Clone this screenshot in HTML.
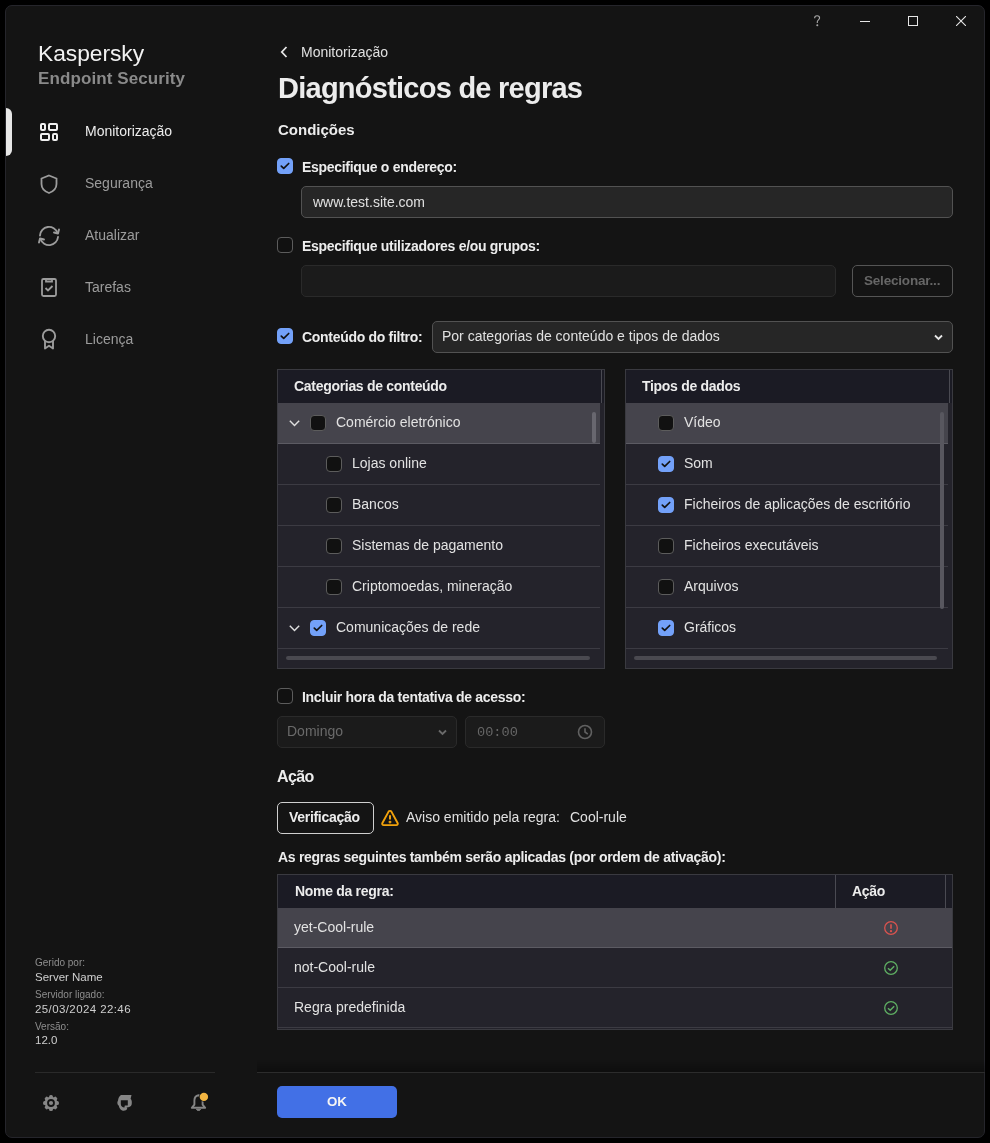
<!DOCTYPE html>
<html><head><meta charset="utf-8">
<style>
*{margin:0;padding:0;box-sizing:border-box}
html,body{width:990px;height:1143px;background:#000;overflow:hidden}
body{font-family:"Liberation Sans",sans-serif;color:#e8e8e8;position:relative}
.win{position:absolute;left:5px;top:5px;width:980px;height:1133px;background:#141414;border:1px solid #25252b;border-radius:7px;overflow:hidden}
.a{position:absolute;white-space:nowrap;line-height:1;will-change:transform}
.b{font-weight:bold}
.ind{position:absolute;left:6px;top:108px;width:6px;height:48px;background:#e6e6e6;border-radius:0 6px 6px 0}
.nav{font-size:14px;color:#9c9c9c}
.foot1{font-size:10px;color:#8e8e8e}
.foot2{font-size:11.5px;color:#cfcfcf}
.cb{position:absolute;width:16px;height:16px;border-radius:4px;border:1px solid #5c5c5c;background:#111}
.cb.on{background:#73a1f9;border-color:#73a1f9}
.cb svg{position:absolute;left:-1px;top:-1px}
.lbl{font-size:14px;font-weight:bold;color:#ececec;letter-spacing:-0.3px}
.inp{position:absolute;border-radius:5px}
.tbl{position:absolute;border:1px solid #3a3a40;background:#24232b}
.hdr{position:absolute;left:0;top:0;background:#1b1b24}
.row{position:absolute;left:0;height:41px;border-bottom:1px solid #3c3b43}
.row.hl{background:#45444c;border-bottom-color:#5c5b63}
.rt{font-size:14px;color:#e2e2e2}
.ht{font-size:14px;font-weight:bold;color:#ececec;letter-spacing:-0.3px}
</style></head><body>
<div class="win"></div>

<!-- sidebar -->
<div class="a" style="left:37.6px;top:42.2px;font-size:22.8px;color:#f2f2f2;letter-spacing:-0.05px">Kaspersky</div>
<div class="a b" style="left:37.8px;top:70.4px;font-size:17px;color:#8a8a8a;letter-spacing:0.1px">Endpoint Security</div>
<div class="ind"></div>

<svg class="a" style="left:40px;top:123px" width="18" height="18" viewBox="0 0 18 18" fill="none" stroke="#f0f0f0" stroke-width="2">
<rect x="1" y="1" width="4" height="6" rx="1"/><rect x="9" y="1" width="8" height="6" rx="1"/><rect x="1" y="11" width="8" height="6" rx="1"/><rect x="13" y="11" width="4" height="6" rx="1"/></svg>
<div class="a nav" style="left:85px;top:124.4px;color:#ededed">Monitorização</div>

<svg class="a" style="left:40px;top:174px" width="18" height="20" viewBox="0 0 18 20" fill="none" stroke="#9c9c9c" stroke-width="1.8">
<path d="M9 1.5 L16.5 4.5 V10 C16.5 14.5 13 17.5 9 19 C5 17.5 1.5 14.5 1.5 10 V4.5 Z"/></svg>
<div class="a nav" style="left:85px;top:176.4px">Segurança</div>

<svg class="a" style="left:37px;top:224px" width="24" height="24" viewBox="0 0 24 24" fill="none" stroke="#9c9c9c" stroke-width="1.9" stroke-linecap="round" stroke-linejoin="round">
<path d="M3 11.5 A9 9 0 0 1 20.5 9"/><path d="M21 13 A9 9 0 0 1 3.5 15"/><path d="M22 5.5 L21 9.5 L17 8.5"/><path d="M2 18.5 L3 14.5 L7 15.5"/></svg>
<div class="a nav" style="left:85px;top:228.4px">Atualizar</div>

<svg class="a" style="left:40px;top:277px" width="18" height="20" viewBox="0 0 18 20" fill="none" stroke="#9c9c9c" stroke-width="1.8">
<rect x="2" y="2" width="14" height="17" rx="1.5"/><path d="M6 2 V4.5 H12 V2"/><path d="M5.5 11 L8 13.5 L12.5 9"/></svg>
<div class="a nav" style="left:85px;top:280.4px">Tarefas</div>

<svg class="a" style="left:40px;top:328px" width="18" height="22" viewBox="0 0 18 22" fill="none" stroke="#9c9c9c" stroke-width="1.9" stroke-linejoin="round">
<circle cx="9" cy="8" r="6.2"/><path d="M5 13 V20.5 L9 17.8 L13 20.5 V13"/></svg>
<div class="a nav" style="left:85px;top:332.4px">Licença</div>

<div class="a foot1" style="left:35px;top:957.7px">Gerido por:</div>
<div class="a foot2" style="left:35px;top:971.5px">Server Name</div>
<div class="a foot1" style="left:35px;top:989.7px">Servidor ligado:</div>
<div class="a foot2" style="left:35px;top:1003.5px;letter-spacing:0.4px">25/03/2024 22:46</div>
<div class="a foot1" style="left:35px;top:1021.7px">Versão:</div>
<div class="a foot2" style="left:35px;top:1035px">12.0</div>
<div class="a" style="left:35px;top:1072px;width:180px;height:1px;background:#2a2a2a"></div>

<!-- footer icons -->
<svg class="a" style="left:38px;top:1090px" width="26" height="26" viewBox="0 0 26 26"><g fill="#868686"><rect x="11.1" y="5.1" width="3.8" height="4" rx="1.5" transform="rotate(0 13 13)"/><rect x="11.1" y="5.1" width="3.8" height="4" rx="1.5" transform="rotate(45 13 13)"/><rect x="11.1" y="5.1" width="3.8" height="4" rx="1.5" transform="rotate(90 13 13)"/><rect x="11.1" y="5.1" width="3.8" height="4" rx="1.5" transform="rotate(135 13 13)"/><rect x="11.1" y="5.1" width="3.8" height="4" rx="1.5" transform="rotate(180 13 13)"/><rect x="11.1" y="5.1" width="3.8" height="4" rx="1.5" transform="rotate(225 13 13)"/><rect x="11.1" y="5.1" width="3.8" height="4" rx="1.5" transform="rotate(270 13 13)"/><rect x="11.1" y="5.1" width="3.8" height="4" rx="1.5" transform="rotate(315 13 13)"/><circle cx="13" cy="13" r="6.3"/></g><circle cx="13" cy="13" r="3.9" fill="#141414"/><circle cx="13" cy="13" r="2.1" fill="#868686"/></svg>
<svg class="a" style="left:112px;top:1090px" width="26" height="26" viewBox="0 0 26 26"><path fill="#868686" fill-rule="evenodd" d="M9 5 L19.5 5 L18.6 8.8 C19.8 9.8 20.2 12.5 19.6 14.8 C19 16.6 17 17.6 14.6 17.6 L15.3 18.8 C14.6 20.4 12.4 21.2 10.2 20.6 C8.2 19.8 7.2 17.8 6.8 15.8 C5.2 14.6 4.8 12.4 6 10.6 C6.3 8.2 7.3 6 9 5 Z M8.8 10.2 L15.8 10.2 L15.8 15.4 L12.8 15.6 L12.4 17.6 C10.4 17.4 8.8 16.2 8.8 14 Z"/></svg>
<svg class="a" style="left:185px;top:1088px" width="28" height="28" viewBox="0 0 28 28" fill="none" stroke="#868686" stroke-width="1.9" stroke-linejoin="round">
<path d="M6.8 19.8 H20.2 L17.6 16.6 V12.6 C17.6 9.6 16.2 7.6 13.5 7.2 C10.8 7.6 9.4 9.6 9.4 12.6 V16.6 Z"/><path d="M11.4 21.4 C12 22.8 15 22.8 15.6 21.4 Z" fill="#868686" stroke-width="1"/>
<circle cx="18.9" cy="8.9" r="4.9" fill="#141414" stroke="none"/><circle cx="18.9" cy="8.9" r="4.2" fill="#f2b541" stroke="none"/></svg>

<!-- title bar -->
<svg class="a" style="left:812px;top:14px" width="10" height="13" viewBox="0 0 10 13" fill="none" stroke="#a8a8a8" stroke-width="1.1"><path d="M2.6 4.2 C2.6 2.6 3.7 1.8 5.1 1.8 C6.6 1.8 7.6 2.7 7.6 4.1 C7.6 5.6 5.3 6.2 5.3 7.8 V9"/><circle cx="5.3" cy="11.2" r="0.45" fill="#a8a8a8"/></svg>
<div class="a" style="left:860px;top:21px;width:10px;height:1px;background:#e6e6e6"></div>
<div class="a" style="left:908px;top:16px;width:10px;height:10px;border:1px solid #e6e6e6"></div>
<svg class="a" style="left:956px;top:16px" width="10" height="10" viewBox="0 0 10 10" stroke="#e6e6e6" stroke-width="1.1"><path d="M0 0 L10 10 M10 0 L0 10"/></svg>

<!-- header -->
<svg class="a" style="left:280px;top:46px" width="8" height="12" viewBox="0 0 8 12" fill="none" stroke="#e6e6e6" stroke-width="1.8"><path d="M6.5 1 L1.8 6 L6.5 11"/></svg>
<div class="a" style="left:300.9px;top:45.4px;font-size:14px;color:#e0e0e0">Monitorização</div>
<div class="a b" style="left:277.5px;top:74.2px;font-size:29px;color:#ececec;letter-spacing:-0.75px">Diagnósticos de regras</div>
<div class="a b" style="left:278px;top:122.2px;font-size:15px;color:#ececec">Condições</div>

<!-- address -->
<div class="cb on" style="left:277px;top:158px"><svg width="16" height="16" viewBox="0 0 16 16" fill="none" stroke="#121212" stroke-width="1.7" stroke-linecap="round" stroke-linejoin="round"><path d="M4.3 8.1 L6.7 10.4 L11.7 5.5"/></svg></div>
<div class="a lbl" style="left:301.7px;top:160px">Especifique o endereço:</div>
<div class="inp" style="left:301px;top:186px;width:652px;height:32px;background:#262626;border:1px solid #525252"></div>
<div class="a" style="left:313px;top:195px;font-size:14px;color:#e0e0e0">www.test.site.com</div>

<!-- users -->
<div class="cb" style="left:277px;top:237px"></div>
<div class="a lbl" style="left:301.7px;top:239.4px">Especifique utilizadores e/ou grupos:</div>
<div class="inp" style="left:301px;top:265px;width:535px;height:32px;background:#1b1b1b;border:1px solid #2a2a2a"></div>
<div class="inp" style="left:852px;top:265px;width:101px;height:32px;border:1px solid #555"></div>
<div class="a b" style="left:864px;top:273.5px;font-size:13.5px;color:#666;letter-spacing:-0.2px">Selecionar...</div>

<!-- filter -->
<div class="cb on" style="left:277px;top:328px"><svg width="16" height="16" viewBox="0 0 16 16" fill="none" stroke="#121212" stroke-width="1.7" stroke-linecap="round" stroke-linejoin="round"><path d="M4.3 8.1 L6.7 10.4 L11.7 5.5"/></svg></div>
<div class="a lbl" style="left:301.7px;top:330.4px">Conteúdo do filtro:</div>
<div class="inp" style="left:432px;top:321px;width:521px;height:32px;background:#262626;border:1px solid #525252"></div>
<div class="a" style="left:441.7px;top:329.4px;font-size:14px;color:#e0e0e0">Por categorias de conteúdo e tipos de dados</div>
<svg class="a" style="left:934px;top:334px" width="9" height="7" viewBox="0 0 9 7" fill="none" stroke="#e6e6e6" stroke-width="1.8"><path d="M1 1.5 L4.5 5 L8 1.5"/></svg>

<div class="tbl" style="left:277px;top:369px;width:328px;height:300px"></div>
<div class="hdr" style="position:absolute;left:278px;top:370px;width:326px;height:33px;background:#1b1b24"></div>
<div class="a" style="left:601px;top:370px;width:1px;height:33px;background:#4a4a52"></div>
<div class="a ht" style="left:294px;top:379.2px">Categorias de conteúdo</div>
<div class="a" style="left:278px;top:403px;width:322px;height:40px;background:#45444c"></div>
<div class="a" style="left:278px;top:443px;width:322px;height:1px;background:#5c5b63"></div>
<svg class="a" style="left:289px;top:420px" width="11" height="7" viewBox="0 0 11 7" fill="none" stroke="#e0e0e0" stroke-width="1.4"><path d="M0.8 0.8 L5.5 5.6 L10.2 0.8"/></svg>
<div class="cb" style="left:310px;top:415px"></div>
<div class="a rt" style="left:336px;top:415.4px">Comércio eletrónico</div>
<div class="a" style="left:278px;top:444px;width:322px;height:40px;background:#24232b"></div>
<div class="a" style="left:278px;top:484px;width:322px;height:1px;background:#3c3b43"></div>
<div class="cb" style="left:326px;top:456px"></div>
<div class="a rt" style="left:352px;top:456.4px">Lojas online</div>
<div class="a" style="left:278px;top:485px;width:322px;height:40px;background:#24232b"></div>
<div class="a" style="left:278px;top:525px;width:322px;height:1px;background:#3c3b43"></div>
<div class="cb" style="left:326px;top:497px"></div>
<div class="a rt" style="left:352px;top:497.4px">Bancos</div>
<div class="a" style="left:278px;top:526px;width:322px;height:40px;background:#24232b"></div>
<div class="a" style="left:278px;top:566px;width:322px;height:1px;background:#3c3b43"></div>
<div class="cb" style="left:326px;top:538px"></div>
<div class="a rt" style="left:352px;top:538.4px">Sistemas de pagamento</div>
<div class="a" style="left:278px;top:567px;width:322px;height:40px;background:#24232b"></div>
<div class="a" style="left:278px;top:607px;width:322px;height:1px;background:#3c3b43"></div>
<div class="cb" style="left:326px;top:579px"></div>
<div class="a rt" style="left:352px;top:579.4px">Criptomoedas, mineração</div>
<div class="a" style="left:278px;top:608px;width:322px;height:40px;background:#24232b"></div>
<div class="a" style="left:278px;top:648px;width:322px;height:1px;background:#3c3b43"></div>
<svg class="a" style="left:289px;top:625px" width="11" height="7" viewBox="0 0 11 7" fill="none" stroke="#e0e0e0" stroke-width="1.4"><path d="M0.8 0.8 L5.5 5.6 L10.2 0.8"/></svg>
<div class="cb on" style="left:310px;top:620px"><svg width="16" height="16" viewBox="0 0 16 16" fill="none" stroke="#121212" stroke-width="1.7" stroke-linecap="round" stroke-linejoin="round"><path d="M4.3 8.1 L6.7 10.4 L11.7 5.5"/></svg></div>
<div class="a rt" style="left:336px;top:620.4px">Comunicações de rede</div>
<div class="a" style="left:592px;top:412px;width:4px;height:31px;border-radius:2px;background:#68676f"></div>
<div class="a" style="left:286px;top:656px;width:304px;height:4px;border-radius:2px;background:#4a4950"></div>
<div class="tbl" style="left:625px;top:369px;width:328px;height:300px"></div>
<div class="a" style="left:626px;top:370px;width:326px;height:33px;background:#1b1b24"></div>
<div class="a" style="left:949px;top:370px;width:1px;height:33px;background:#4a4a52"></div>
<div class="a ht" style="left:642px;top:379.2px">Tipos de dados</div>
<div class="a" style="left:626px;top:403px;width:322px;height:40px;background:#45444c"></div>
<div class="a" style="left:626px;top:443px;width:322px;height:1px;background:#5c5b63"></div>
<div class="cb" style="left:658px;top:415px"></div>
<div class="a rt" style="left:684px;top:415.4px">Vídeo</div>
<div class="a" style="left:626px;top:444px;width:322px;height:40px;background:#24232b"></div>
<div class="a" style="left:626px;top:484px;width:322px;height:1px;background:#3c3b43"></div>
<div class="cb on" style="left:658px;top:456px"><svg width="16" height="16" viewBox="0 0 16 16" fill="none" stroke="#121212" stroke-width="1.7" stroke-linecap="round" stroke-linejoin="round"><path d="M4.3 8.1 L6.7 10.4 L11.7 5.5"/></svg></div>
<div class="a rt" style="left:684px;top:456.4px">Som</div>
<div class="a" style="left:626px;top:485px;width:322px;height:40px;background:#24232b"></div>
<div class="a" style="left:626px;top:525px;width:322px;height:1px;background:#3c3b43"></div>
<div class="cb on" style="left:658px;top:497px"><svg width="16" height="16" viewBox="0 0 16 16" fill="none" stroke="#121212" stroke-width="1.7" stroke-linecap="round" stroke-linejoin="round"><path d="M4.3 8.1 L6.7 10.4 L11.7 5.5"/></svg></div>
<div class="a rt" style="left:684px;top:497.4px">Ficheiros de aplicações de escritório</div>
<div class="a" style="left:626px;top:526px;width:322px;height:40px;background:#24232b"></div>
<div class="a" style="left:626px;top:566px;width:322px;height:1px;background:#3c3b43"></div>
<div class="cb" style="left:658px;top:538px"></div>
<div class="a rt" style="left:684px;top:538.4px">Ficheiros executáveis</div>
<div class="a" style="left:626px;top:567px;width:322px;height:40px;background:#24232b"></div>
<div class="a" style="left:626px;top:607px;width:322px;height:1px;background:#3c3b43"></div>
<div class="cb" style="left:658px;top:579px"></div>
<div class="a rt" style="left:684px;top:579.4px">Arquivos</div>
<div class="a" style="left:626px;top:608px;width:322px;height:40px;background:#24232b"></div>
<div class="a" style="left:626px;top:648px;width:322px;height:1px;background:#3c3b43"></div>
<div class="cb on" style="left:658px;top:620px"><svg width="16" height="16" viewBox="0 0 16 16" fill="none" stroke="#121212" stroke-width="1.7" stroke-linecap="round" stroke-linejoin="round"><path d="M4.3 8.1 L6.7 10.4 L11.7 5.5"/></svg></div>
<div class="a rt" style="left:684px;top:620.4px">Gráficos</div>
<div class="a" style="left:940px;top:412px;width:4px;height:197px;border-radius:2px;background:#58575f"></div>
<div class="a" style="left:634px;top:656px;width:303px;height:4px;border-radius:2px;background:#4a4950"></div>
<div class="cb" style="left:277px;top:688px"></div>
<div class="a lbl" style="left:301.7px;top:690px">Incluir hora da tentativa de acesso:</div>
<div class="inp" style="left:277px;top:716px;width:180px;height:32px;background:#1b1b1b;border:1px solid #2a2a2a"></div>
<div class="a" style="left:286.6px;top:724.4px;font-size:14px;color:#6a6a6a">Domingo</div>
<svg class="a" style="left:438px;top:729px" width="9" height="7" viewBox="0 0 9 7" fill="none" stroke="#6a6a6a" stroke-width="1.8"><path d="M1 1.5 L4.5 5 L8 1.5"/></svg>
<div class="inp" style="left:465px;top:716px;width:140px;height:32px;background:#1b1b1b;border:1px solid #2a2a2a"></div>
<div class="a" style="left:477px;top:726.2px;font-size:13.6px;color:#666;font-family:'Liberation Mono',monospace">00:00</div>
<svg class="a" style="left:577px;top:724px" width="16" height="16" viewBox="0 0 16 16" fill="none" stroke="#616161" stroke-width="1.6"><circle cx="8" cy="8" r="6.5"/><path d="M8 4.2 V8 L10.8 10.2"/></svg>
<div class="a b" style="left:276.6px;top:768.8px;font-size:16px;color:#ececec;letter-spacing:-0.6px">Ação</div>
<div class="inp" style="left:277px;top:802px;width:97px;height:32px;border:1px solid #cfcfcf"></div>
<div class="a lbl" style="left:289.2px;top:810px">Verificação</div>
<svg class="a" style="left:381px;top:809px" width="18" height="18" viewBox="0 0 18 18" fill="none" stroke="#f2a20c" stroke-width="1.9" stroke-linejoin="round"><path d="M7.6 2.6 C8.2 1.6 9.8 1.6 10.4 2.6 L16.6 14 C17.1 15 16.5 16.1 15.3 16.1 H2.7 C1.5 16.1 0.9 15 1.4 14 Z"/><path d="M9 6.3 V10.6" stroke-width="2"/><circle cx="9" cy="13.1" r="0.5" fill="#f2a20c"/></svg>
<div class="a" style="left:406.4px;top:810px;font-size:14px;color:#e0e0e0">Aviso emitido pela regra:</div>
<div class="a" style="left:570px;top:810px;font-size:14px;color:#e0e0e0">Cool-rule</div>
<div class="a lbl" style="left:277.6px;top:850px">As regras seguintes também serão aplicadas (por ordem de ativação):</div>
<div class="tbl" style="left:277px;top:874px;width:676px;height:156px"></div>
<div class="a" style="left:278px;top:875px;width:674px;height:33px;background:#1b1b24"></div>
<div class="a" style="left:835px;top:875px;width:1px;height:33px;background:#4a4a52"></div>
<div class="a" style="left:945px;top:875px;width:1px;height:33px;background:#4a4a52"></div>
<div class="a ht" style="left:294.7px;top:884.4px">Nome da regra:</div>
<div class="a ht" style="left:852.3px;top:884.4px">Ação</div>
<div class="a" style="left:278px;top:908px;width:674px;height:39px;background:#45444c"></div>
<div class="a" style="left:278px;top:947px;width:674px;height:1px;background:#5c5b63"></div>
<div class="a rt" style="left:294px;top:920.1px">yet-Cool-rule</div>
<svg class="a" style="left:884px;top:921px" width="14" height="14" viewBox="0 0 14 14" fill="none" stroke="#d9534f" stroke-width="1.3"><circle cx="7" cy="7" r="6.3"/><path d="M7 3.3 V7.8" stroke-width="1.6"/><circle cx="7" cy="10.2" r="0.5" fill="#d9534f"/></svg>
<div class="a" style="left:278px;top:948px;width:674px;height:39px;background:#24232b"></div>
<div class="a" style="left:278px;top:987px;width:674px;height:1px;background:#3c3b43"></div>
<div class="a rt" style="left:294px;top:960.1px">not-Cool-rule</div>
<svg class="a" style="left:884px;top:961px" width="14" height="14" viewBox="0 0 14 14" fill="none" stroke="#5fae63" stroke-width="1.3"><circle cx="7" cy="7" r="6.3"/><path d="M4 7.3 L6.2 9.3 L10.2 5.2" stroke-width="1.5"/></svg>
<div class="a" style="left:278px;top:988px;width:674px;height:39px;background:#24232b"></div>
<div class="a" style="left:278px;top:1027px;width:674px;height:1px;background:#3c3b43"></div>
<div class="a rt" style="left:294px;top:1000.1px">Regra predefinida</div>
<svg class="a" style="left:884px;top:1001px" width="14" height="14" viewBox="0 0 14 14" fill="none" stroke="#5fae63" stroke-width="1.3"><circle cx="7" cy="7" r="6.3"/><path d="M4 7.3 L6.2 9.3 L10.2 5.2" stroke-width="1.5"/></svg>
<div class="a" style="left:257px;top:1060px;width:728px;height:12px;background:linear-gradient(rgba(0,0,0,0),rgba(0,0,0,0.3))"></div>
<div class="a" style="left:257px;top:1072px;width:728px;height:1px;background:#2c2c2c"></div>
<div class="a" style="left:277px;top:1086px;width:120px;height:32px;border-radius:5px;background:#4270e6"></div>
<div class="a b" style="left:327px;top:1094.6px;font-size:13.3px;color:#f4f4f4">OK</div>
</body></html>
